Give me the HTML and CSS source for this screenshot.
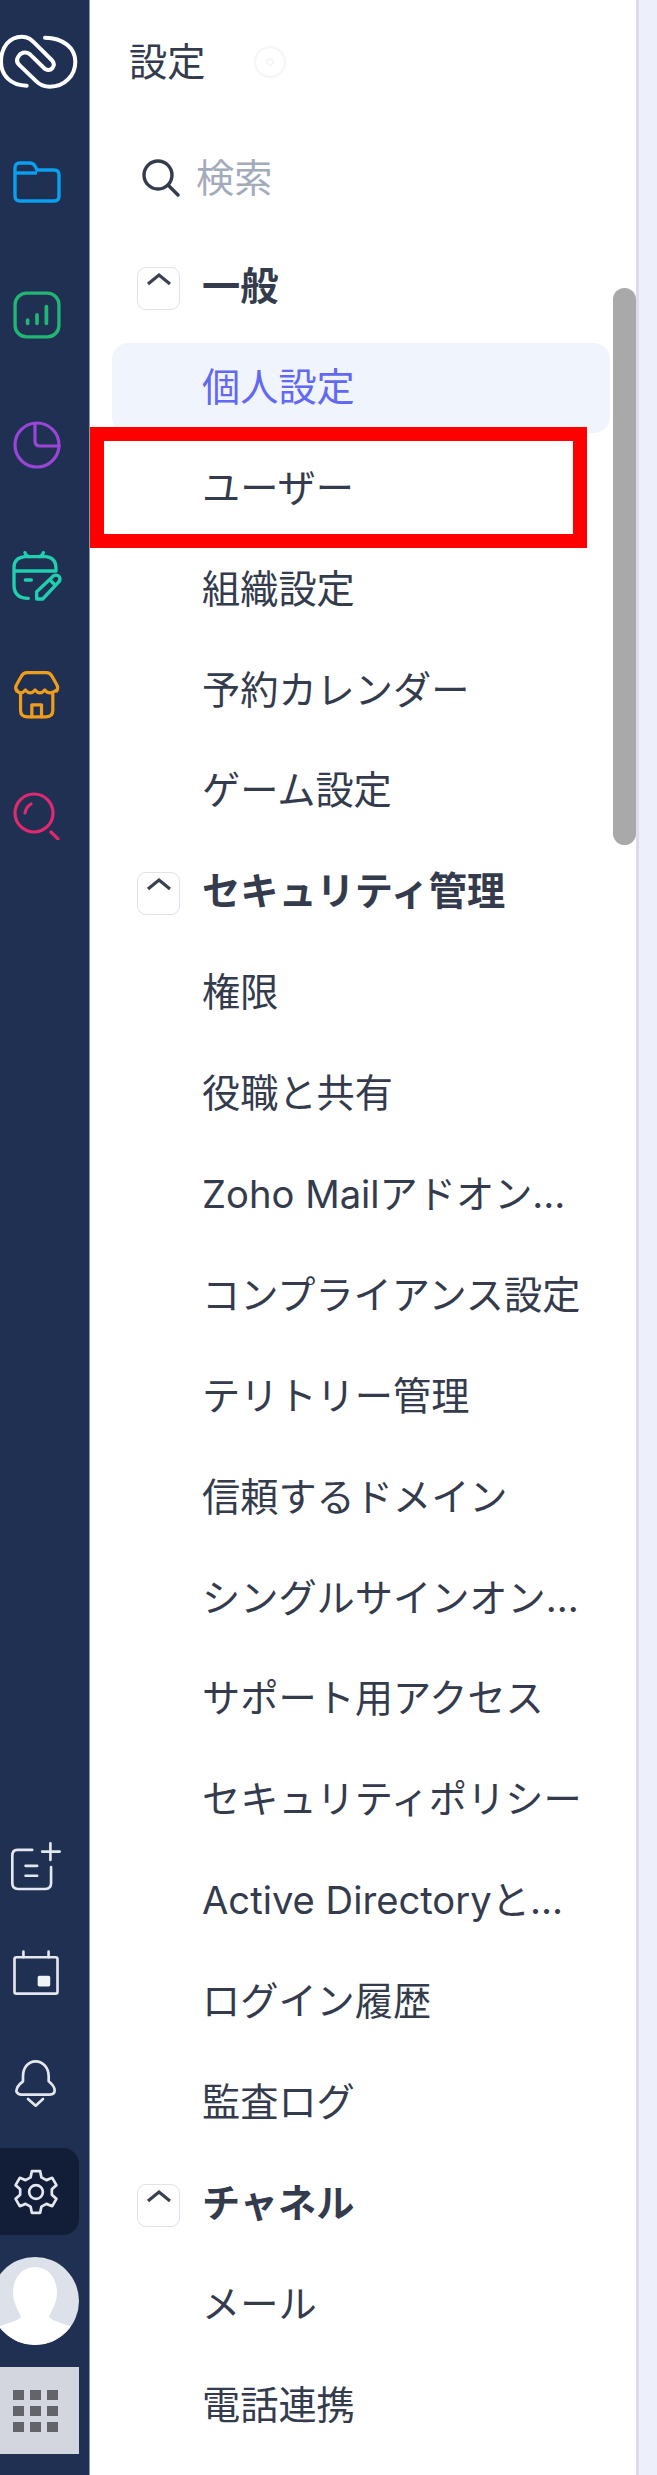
FILE: index.html
```html
<!DOCTYPE html>
<html lang="ja">
<head>
    <meta charset="UTF-8">
    <title>設定</title>
    <link rel="stylesheet" href="styles.css">
</head>
<body>
    <div class="app">
        <!-- left icon rail -->
        <nav class="rail">
            <div class="rail-top">
                <svg class="logo" viewBox="0 0 255 225" fill="none" stroke="#fff" stroke-width="12" stroke-linecap="round" stroke-linejoin="round">
                    <path d="M80 182 C32 182 3 150 3 110 C3 65 30 35 65 35 C85 35 95 45 105 55 L155 105 C170 120 155 142 135 132 L90 88 C75 76 60 85 55 95 C48 105 52 115 60 122 L110 170 C122 182 135 185 150 185 C195 185 226 150 226 110 C226 70 190 38 135 38"/>
                </svg>
                <div class="rail-item">
                    <svg viewBox="0 0 48 42" fill="none" stroke="#0b9ff0" stroke-width="3.4" stroke-linejoin="round"><path d="M2 35 V7 Q2 2 7 2 H17 Q20 2 22 5 L24 9 H41 Q46 9 46 14 V35 Q46 40 41 40 H7 Q2 40 2 35 Z"/><path d="M2 12 H24"/></svg>
                </div>
                <div class="rail-item">
                    <svg viewBox="0 0 46 46" fill="none" stroke="#22b573" stroke-width="3.2" stroke-linecap="round"><rect x="2" y="2" width="42" height="42" rx="11"/><path d="M14 31 V28 M23 31 V23 M32 31 V15" stroke-width="3.6"/></svg>
                </div>
                <div class="rail-item">
                    <svg viewBox="0 0 48 48" fill="none" stroke="#9b45d8" stroke-width="3.2" stroke-linecap="round" stroke-linejoin="round"><circle cx="24" cy="24" r="22"/><path d="M22 3 V20 Q22 25 27 25 L46 25"/></svg>
                </div>
                <div class="rail-item rail-item-cal">
                    <svg class="icon-wide" viewBox="36 28 150 150" fill="none" stroke="#1fcfae" stroke-width="10" stroke-linecap="round" stroke-linejoin="round"><path d="M85 170 Q42 170 42 130 V78 Q42 48 75 45 H138 Q168 48 168 80 V88 H42"/><path d="M75 33 Q78 45 88 45 M130 33 Q127 45 117 45"/><path d="M76 115 H94"/><path d="M110 172 V150 L160 103 Q170 97 178 105 Q183 115 175 122 L128 172 Z"/><path d="M150 115 L165 130"/></svg>
                </div>
                <div class="rail-item rail-item-store">
                    <svg class="icon-wide" viewBox="36 390 150 155" fill="none" stroke="#ef9d1a" stroke-width="10" stroke-linecap="round" stroke-linejoin="round"><path d="M48 455 Q42 445 48 435 L62 410 Q68 398 80 398 H140 Q152 398 158 410 L172 435 Q178 445 172 455"/><path d="M48 452 Q60 470 75 452 Q90 470 105 452 Q120 470 135 452 Q150 470 172 452"/><path d="M60 465 V515 Q60 535 80 535 H140 Q160 535 160 515 V465"/><path d="M95 535 V498 H125 V535"/></svg>
                </div>
                <div class="rail-item">
                    <svg viewBox="0 0 48 48" fill="none" stroke="#e0296e" stroke-width="3.2" stroke-linecap="round"><circle cx="21" cy="21" r="19"/><path d="M12 21 Q13 15 18 12"/><path d="M38 40 L45 47"/></svg>
                </div>
            </div>
            <div class="rail-bottom">
                <div class="rail-util">
                    <svg class="util-note" viewBox="25 30 160 160" fill="none" stroke="#e5e7ee" stroke-width="8" stroke-linecap="round"><path d="M95 60 H50 Q35 60 35 78 V160 Q35 178 52 178 H135 Q152 178 152 160 V112"/><path d="M75 108 H110 M75 138 H110"/><path d="M150 40 V90 M125 65 H178"/></svg>
                </div>
                <div class="rail-util">
                    <svg class="util-cal" viewBox="35 360 150 145" fill="none" stroke="#e5e7ee" stroke-width="8" stroke-linecap="round"><rect x="45" y="382" width="130" height="110" rx="6"/><path d="M72 365 V382 M148 365 V382"/><rect x="115" y="438" width="38" height="32" rx="5" fill="#f2f3f7" stroke="none"/></svg>
                </div>
                <div class="rail-util">
                    <svg class="util-bell" viewBox="40 685 135 150" fill="none" stroke="#e5e7ee" stroke-width="8" stroke-linecap="round" stroke-linejoin="round"><path d="M108 695 C85 695 70 715 70 740 V755 Q50 770 50 785 Q55 795 65 795 H150 Q165 795 165 782 Q165 770 147 755 V740 C147 715 130 695 108 695 Z"/><path d="M85 808 L108 828 L130 808"/></svg>
                </div>
                <div class="rail-tile rail-tile-active">
                    <svg class="util-gear" viewBox="0 0 24 24" fill="none" stroke="#e5e7ee" stroke-width="1.300" stroke-linejoin="round"><path d="M10 2 H14 L14.600 5 L17 6.300 L19.800 5.200 L21.800 8.700 L19.600 10.700 V13.300 L21.800 15.300 L19.800 18.800 L17 17.700 L14.600 19 L14 22 H10 L9.400 19 L7 17.700 L4.200 18.800 L2.200 15.300 L4.400 13.300 V10.700 L2.200 8.700 L4.200 5.200 L7 6.300 L9.400 5 Z"/><circle cx="12" cy="12" r="3.300"/></svg>
                </div>
                <div class="avatar">
                    <svg viewBox="0 0 88 88"><path d="M44 10 C58 10 66 22 66 36 C66 46 60 54 58 60 C64 66 74 66 86 72 A44 44 0 0 1 2 72 C14 66 24 66 30 60 C28 54 22 46 22 36 C22 22 30 10 44 10 Z" fill="#fff"/></svg>
                </div>
                <div class="rail-tile rail-tile-apps">
                    <div class="apps-grid">
                        <span></span><span></span><span></span>
                        <span></span><span></span><span></span>
                        <span></span><span></span><span></span>
                    </div>
                </div>
            </div>
        </nav>

        <!-- settings menu -->
        <aside class="menu">
            <div class="menu-title">
                <span>設定</span>
                <svg class="title-gear" viewBox="0 0 24 24" fill="none" stroke="#f6f6f8" stroke-width="1.500"><circle cx="12" cy="12" r="10"/><circle cx="12" cy="12" r="2"/></svg>
            </div>
            <div class="menu-search">
                <svg viewBox="0 0 38 38" fill="none" stroke="#333b4d" stroke-width="3.400" stroke-linecap="round"><circle cx="16" cy="16" r="14"/><path d="M26 26 L36 36"/></svg>
                <span>検索</span>
            </div>

            <div class="group-head"><span class="chevron"><svg viewBox="0 0 26 14" fill="none" stroke="#3a4052" stroke-width="3.200"><path d="M2 12 L13 3 L24 12"/></svg></span>一般</div>
            <div class="item item-active">個人設定</div>
            <div class="item">ユーザー<div class="redbox"></div></div>
            <div class="item">組織設定</div>
            <div class="item">予約カレンダー</div>
            <div class="item">ゲーム設定</div>

            <div class="group-head"><span class="chevron"><svg viewBox="0 0 26 14" fill="none" stroke="#3a4052" stroke-width="3.200"><path d="M2 12 L13 3 L24 12"/></svg></span>セキュリティ管理</div>
            <div class="item">権限</div>
            <div class="item">役職と共有</div>
            <div class="item">Zoho Mailアドオン...</div>
            <div class="item">コンプライアンス設定</div>
            <div class="item">テリトリー管理</div>
            <div class="item">信頼するドメイン</div>
            <div class="item">シングルサインオン...</div>
            <div class="item">サポート用アクセス</div>
            <div class="item">セキュリティポリシー</div>
            <div class="item">Active Directoryと...</div>
            <div class="item">ログイン履歴</div>
            <div class="item">監査ログ</div>

            <div class="group-head"><span class="chevron"><svg viewBox="0 0 26 14" fill="none" stroke="#3a4052" stroke-width="3.200"><path d="M2 12 L13 3 L24 12"/></svg></span>チャネル</div>
            <div class="item">メール</div>
            <div class="item">電話連携</div>

            <div class="scroll-thumb"></div>
        </aside>

        <div class="content"></div>
    </div>
</body>
</html>
```

FILE: styles.css
```css
/* Base */
html, body {
    margin: 0;
    padding: 0;
    height: 100%;
    overflow: hidden;
    background: #fff;
}

body {
    font-family: Inter, "Noto Sans CJK JP", sans-serif;
    color: #333b4d;
}

.app {
    display: flex;
    height: 2475px;
}

/* Icon rail */
.rail {
    width: 89px;
    flex: none;
    background: #1f3053;
    border-right: 1px solid #8e95a6;
    display: flex;
    flex-direction: column;
    justify-content: space-between;
}

.rail-top {
    display: flex;
    flex-direction: column;
    padding-top: 25px;
}

.logo {
    width: 85px;
    height: 75px;
    margin-bottom: 58px;
}

.rail-item {
    height: 130px;
    padding-left: 13px;
}

.logo + .rail-item {
    height: 133px;
}

.rail-item-cal {
    height: 119px;
    margin-left: -1px;
}

.rail-item-store {
    height: 122px;
    margin-left: -1px;
}

.rail-item svg {
    width: 48px;
    height: 48px;
}

.rail-item .icon-wide {
    width: 50px;
    height: 50px;
}

.rail-bottom {
    display: flex;
    flex-direction: column;
    padding-bottom: 21px;
}

.rail-util {
    height: 110px;
    display: flex;
    justify-content: center;
    padding-right: 18px;
}

.rail-util:nth-child(2) { height: 108px; }
.rail-util:nth-child(3) { height: 90px; }

.util-note { width: 53px; height: 53px; }
.util-cal { width: 50px; height: 48px; }
.util-bell { width: 45px; height: 50px; }
.util-gear { width: 50px; height: 50px; }

.rail-tile {
    width: 71px;
    height: 87px;
    padding-right: 8px;
    display: flex;
    align-items: center;
    justify-content: center;
}

.rail-tile-active {
    background: #121d37;
    border-radius: 0 16px 16px 0;
}

.avatar {
    width: 88px;
    height: 88px;
    margin: 22px 0 22px -9px;
    border-radius: 50%;
    background: #dde1ea;
    overflow: hidden;
}

.avatar svg {
    display: block;
    width: 100%;
    height: 100%;
}

.rail-tile-apps {
    background: #d3d6df;
}

.apps-grid {
    display: grid;
    grid-template-columns: repeat(3, 11px);
    grid-auto-rows: 10px;
    column-gap: 6px;
    row-gap: 6px;
}

.apps-grid span {
    background: #62646a;
}

/* Settings menu */
.menu {
    position: relative;
    width: 549px;
    flex: none;
    box-sizing: border-box;
    padding: 0 26px 0 22px;
    border-right: 3px solid #dcdcec;
    font-size: 38.200px;
    line-height: 52px;
}

.menu-title {
    display: flex;
    align-items: center;
    height: 52px;
    margin-top: 36px;
    padding-left: 17px;
}

.title-gear {
    width: 36px;
    height: 36px;
    margin-left: 47px;
}

.menu-search {
    display: flex;
    align-items: center;
    height: 52px;
    margin-top: 64px;
    padding-left: 30px;
    color: #a3abbb;
}

.menu-search svg {
    width: 38px;
    height: 38px;
    margin-right: 16px;
}

.group-head {
    box-sizing: border-box;
    display: flex;
    align-items: center;
    height: 90px;
    margin-top: 38px;
    margin-bottom: 10.900px;
    padding: 0 0 2px 25px;
    font-weight: 700;
    white-space: nowrap;
}

.group-head ~ .group-head {
    margin-top: 0;
}

.chevron {
    width: 41px;
    height: 37px;
    margin: 5px 22px 0 0;
    padding-top: 4px;
    border: 1px solid #e1e0f0;
    border-radius: 9px;
    display: flex;
    justify-content: center;
    align-items: flex-start;
}

.chevron svg {
    width: 26px;
    height: 14px;
}

.item {
    position: relative;
    box-sizing: border-box;
    height: 90px;
    margin-bottom: 10.900px;
    padding: 0 0 2px 90px;
    display: flex;
    align-items: center;
    border-radius: 16px;
    white-space: nowrap;
}

.item-active {
    background: #f0f4fd;
    color: #6268f2;
}

/* annotation frame drawn on the screenshot */
.redbox {
    position: absolute;
    left: -22px;
    top: -17px;
    width: 497px;
    height: 121px;
    box-sizing: border-box;
    border: 14px solid #ff0000;
}

.scroll-thumb {
    position: absolute;
    top: 288px;
    right: 0;
    width: 23px;
    height: 557px;
    background: #a9a9a9;
    border-radius: 12px;
}

.content {
    flex: 1;
    background: #edf0fa;
}
```
